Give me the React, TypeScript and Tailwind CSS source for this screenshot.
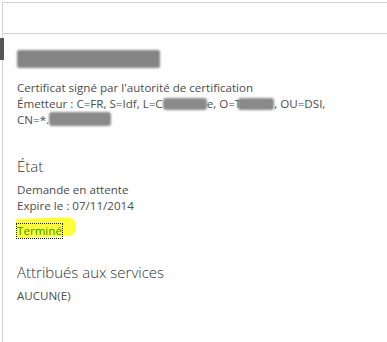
const font = { fontFamily: '"Open Sans", "Noto Sans", sans-serif' };

const Blob = ({ w, h = 12, className = "" }: { w: number; h?: number; className?: string }) => (
  <span
    className={"relative inline-block align-middle rounded-[3px] bg-[#8a8a8a] blur-[1px] " + className}
    style={{ width: w, height: h }}
  />
);

export default function App() {
  return (
    <div className="relative w-[387px] h-[342px] overflow-hidden bg-white text-[#4d4d4d]" style={font}>
      <div className="mt-[2px] ml-[2px] h-[32px] border-t border-b border-l border-[#d2d2d2]" />
      <div className="ml-[2px] h-[308px] border-l border-[#d2d2d2] pl-[14px] pt-[16px]">
        <div className="h-[18px] w-[143px] rounded-[2px] bg-[#858585] blur-[1px]" />
        <div className="mt-[12px] text-[11.6px] leading-[16px]">
          <div>Certificat signé par l'autorité de certification</div>
          <div>
            Émetteur : C=FR, S=Idf, L=C<Blob w={44} className="-mt-[2px]" />e, O=T<Blob w={36} className="-mt-[2px] -ml-[3px]" />, OU=DSI,
          </div>
          <div>
            CN=*.<Blob w={62} h={14} className="-mt-[3px]" />
          </div>
        </div>
        <div className="mt-[28px] text-[15px] font-light leading-[20px] text-[#333]">État</div>
        <div className="mt-[6px] text-[11.6px] leading-[16px]">
          <div>Demande en attente</div>
          <div>Expire le : 07/11/2014</div>
        </div>
        <div className="relative mt-[3px] h-[20px] w-[60px]">
          <div className="absolute -left-[1px] top-[1px] h-[19px] w-[60px] rounded-r-[8px] rounded-l-[2px] bg-[#ffff3a] -rotate-[2deg]" />
          <span className="relative inline-block outline outline-1 outline-dotted outline-[#222] text-[11.6px] leading-[14px] text-[#3a9a00] mt-[3px]">
            Terminé
          </span>
        </div>
        <div className="mt-[25px] text-[15px] font-light leading-[20px] text-[#333]">Attribués aux services</div>
        <div className="mt-[6px] text-[11.6px] leading-[16px]">AUCUN(E)</div>
      </div>
      <div className="absolute left-0 top-[38px] h-[22px] w-[4px] bg-[#555]" />
    </div>
  );
}
